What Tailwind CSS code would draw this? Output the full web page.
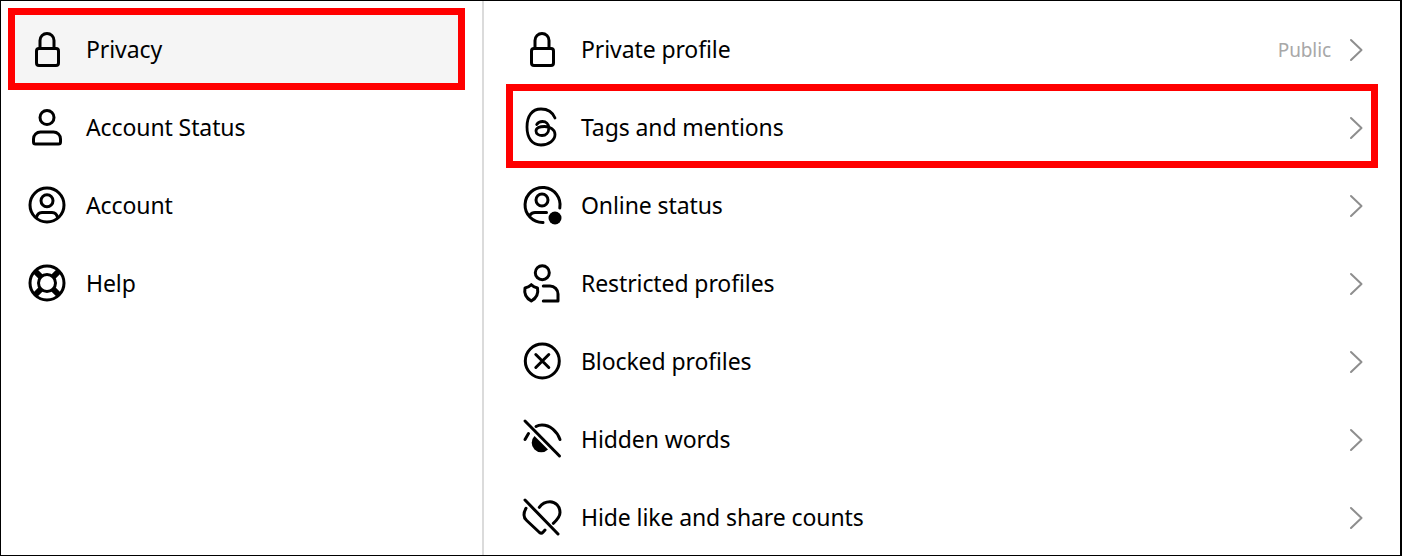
<!DOCTYPE html>
<html lang="en">
<head>
    <meta charset="UTF-8">
    <title>Threads settings - Privacy</title>
    <script src="https://cdn.jsdelivr.net/npm/@tailwindcss/browser@4"></script>
</head>
<body class="bg-white">
    <div class="flex w-[1402px] h-[556px] overflow-hidden border border-r-2 border-black bg-white font-['Noto_Sans',sans-serif] text-[23px] tracking-[-0.1px] text-black">

        <!-- left menu -->
        <nav class="w-[483px] shrink-0 border-r-2 border-[#dbdbdb] pt-[10px]">
            <div class="relative flex items-center h-[78px] ml-[11px] mr-[22px] pl-[17px] gap-[21px] bg-[#f5f5f5]">
                <svg class="w-[36px] h-[36px] overflow-visible" viewBox="0 0 36 36" fill="none" stroke="currentColor" stroke-width="3" stroke-linecap="round" stroke-linejoin="round"><path d="M11 16.5V8.5a7 7 0 0 1 14 0V16.5"/><rect x="7.5" y="16.5" width="22" height="17" rx="2.5"/></svg>
                <span class="pb-[2px]">Privacy</span>
                <div class="absolute -left-[4px] -right-[5px] -top-[3px] -bottom-[1px] border-[7px] border-[#ff0000]"></div>
            </div>
            <div class="flex items-center h-[78px] ml-[11px] mr-[22px] pl-[17px] gap-[21px]">
                <svg class="w-[36px] h-[36px] overflow-visible" viewBox="0 0 36 36" fill="none" stroke="currentColor" stroke-width="3" stroke-linecap="round" stroke-linejoin="round"><circle cx="18" cy="7.5" r="7"/><path d="M4.5 29A7 7 0 0 1 11.5 22H24.5A7 7 0 0 1 31.5 29V32a2 2 0 0 1-2 2H6.5a2 2 0 0 1-2-2Z"/></svg>
                <span class="pb-[2px]">Account Status</span>
            </div>
            <div class="flex items-center h-[78px] ml-[11px] mr-[22px] pl-[17px] gap-[21px]">
                <svg class="w-[36px] h-[36px] overflow-visible" viewBox="0 0 36 36" fill="none" stroke="currentColor" stroke-width="3" stroke-linecap="round" stroke-linejoin="round"><circle cx="18" cy="17" r="17"/><circle cx="18" cy="12.7" r="6"/><path d="M7.5 29.5A6 6 0 0 1 13 24.5H23A6 6 0 0 1 28.5 29.5"/></svg>
                <span class="pb-[2px]">Account</span>
            </div>
            <div class="flex items-center h-[78px] ml-[11px] mr-[22px] pl-[17px] gap-[21px]">
                <svg class="w-[36px] h-[36px] overflow-visible" viewBox="0 0 36 36" fill="none" stroke="currentColor" stroke-width="3"><circle cx="18" cy="17" r="17"/><circle cx="18" cy="17" r="8.5"/><path stroke-width="6" d="M6 5 12 11M30 5 24 11M6 29 12 23M30 29 24 23"/></svg>
                <span class="pb-[2px]">Help</span>
            </div>
        </nav>

        <!-- right list -->
        <div class="flex-1 pt-[10px]">
            <div class="flex items-center h-[78px] ml-[40px] pr-[36px] gap-[21px]">
                <svg class="w-[36px] h-[36px] overflow-visible" viewBox="0 0 36 36" fill="none" stroke="currentColor" stroke-width="3" stroke-linecap="round" stroke-linejoin="round"><path d="M11 16.5V8.5a7 7 0 0 1 14 0V16.5"/><rect x="7.5" y="16.5" width="22" height="17" rx="2.5"/></svg>
                <span class="flex-1 pb-[2px]">Private profile</span>
                <span class="text-[19px] text-[#a8a8a8] -mr-[4px]">Public</span>
                <svg class="w-[16px] h-[24px]" viewBox="0 0 16 24" fill="none" stroke="#8e8e8e" stroke-width="2" stroke-linecap="round" stroke-linejoin="round"><path d="M3 2 13.5 12 3 22"/></svg>
            </div>
            <div class="relative flex items-center h-[78px] ml-[40px] pr-[36px] gap-[21px]">
                <svg class="w-[36px] h-[36px] overflow-visible" viewBox="0 0 36 36" fill="none" stroke="currentColor" stroke-width="2.8" stroke-linecap="round"><path d="M31 8C28.5 2 23-1 17-1 8-1 3 6 3 17 3 28 8 35 17 35 25 35 31 30 31 24.5 31 19.5 26 16.5 20.5 16.5 15.5 16.5 12 18 12 21 12 24 15 25.5 18 25.5 22 25.5 24.8 22.5 24.8 18 24.8 14 22 11.5 18.5 11.5 16 11.5 14 12.5 12.7 14.5"/></svg>
                <span class="flex-1 pb-[2px]">Tags and mentions</span>
                <svg class="w-[16px] h-[24px]" viewBox="0 0 16 24" fill="none" stroke="#8e8e8e" stroke-width="2" stroke-linecap="round" stroke-linejoin="round"><path d="M3 2 13.5 12 3 22"/></svg>
                <div class="absolute -left-[18px] right-[22px] -top-[5px] -bottom-[1px] border-[7px] border-[#ff0000]"></div>
            </div>
            <div class="flex items-center h-[78px] ml-[40px] pr-[36px] gap-[21px]">
                <svg class="w-[36px] h-[36px] overflow-visible" viewBox="0 0 36 36" fill="none" stroke="currentColor" stroke-width="3" stroke-linecap="round" stroke-linejoin="round"><path d="M19 34.5A17.5 17.5 0 1 1 35.8 20"/><circle cx="18" cy="12" r="6"/><path d="M6 27C7.5 25 9 24.5 11 24.5H22.5"/><circle cx="31" cy="30" r="6.5" fill="currentColor" stroke="none"/></svg>
                <span class="flex-1 pb-[2px]">Online status</span>
                <svg class="w-[16px] h-[24px]" viewBox="0 0 16 24" fill="none" stroke="#8e8e8e" stroke-width="2" stroke-linecap="round" stroke-linejoin="round"><path d="M3 2 13.5 12 3 22"/></svg>
            </div>
            <div class="flex items-center h-[78px] ml-[40px] pr-[36px] gap-[21px]">
                <svg class="w-[36px] h-[36px] overflow-visible" viewBox="0 0 36 36" fill="none" stroke="currentColor" stroke-width="3" stroke-linecap="round" stroke-linejoin="round"><circle cx="18.3" cy="6.7" r="7"/><path d="M7.3 18.7C9 20.5 11 21.5 13.5 22 14.5 27 12.5 32 7.3 35 2 32 0 27 1 22 3.5 21.5 5.5 20.5 7.3 18.7Z"/><path d="M19.3 20H26A8 8 0 0 1 34 28V35H19.3"/></svg>
                <span class="flex-1 pb-[2px]">Restricted profiles</span>
                <svg class="w-[16px] h-[24px]" viewBox="0 0 16 24" fill="none" stroke="#8e8e8e" stroke-width="2" stroke-linecap="round" stroke-linejoin="round"><path d="M3 2 13.5 12 3 22"/></svg>
            </div>
            <div class="flex items-center h-[78px] ml-[40px] pr-[36px] gap-[21px]">
                <svg class="w-[36px] h-[36px] overflow-visible" viewBox="0 0 36 36" fill="none" stroke="currentColor" stroke-width="3" stroke-linecap="round" stroke-linejoin="round"><circle cx="18.3" cy="17" r="17"/><path d="M11.8 10.5 24.8 23.5M24.8 10.5 11.8 23.5"/></svg>
                <span class="flex-1 pb-[2px]">Blocked profiles</span>
                <svg class="w-[16px] h-[24px]" viewBox="0 0 16 24" fill="none" stroke="#8e8e8e" stroke-width="2" stroke-linecap="round" stroke-linejoin="round"><path d="M3 2 13.5 12 3 22"/></svg>
            </div>
            <div class="flex items-center h-[78px] ml-[40px] pr-[36px] gap-[21px]">
                <svg class="w-[36px] h-[36px] overflow-visible" viewBox="0 0 36 36" fill="none" stroke="currentColor" stroke-width="3" stroke-linecap="round" stroke-linejoin="round"><path d="M1 -1 35.5 34"/><path d="M1 17.5 4.5 11.5"/><path d="M12 4.5C14 3.3 16 3 18 3 26 3 33 9 36 17.5"/><path fill="currentColor" stroke="none" d="M10.5 14 24 27.5A9.5 9.5 0 0 1 10.5 14Z"/></svg>
                <span class="flex-1 pb-[2px]">Hidden words</span>
                <svg class="w-[16px] h-[24px]" viewBox="0 0 16 24" fill="none" stroke="#8e8e8e" stroke-width="2" stroke-linecap="round" stroke-linejoin="round"><path d="M3 2 13.5 12 3 22"/></svg>
            </div>
            <div class="flex items-center h-[78px] ml-[40px] pr-[36px] gap-[21px]">
                <svg class="w-[36px] h-[36px] overflow-visible" viewBox="0 0 36 36" fill="none" stroke="currentColor" stroke-width="3" stroke-linecap="round" stroke-linejoin="round"><path d="M1 0 34 34"/><path d="M15.3 7.3C18 3.5 22 1.7 26 1.7 31.5 1.7 36 6.5 36 12.5 36 16.5 33 20 29.3 23.3"/><path d="M2 8.3C.7 10.5 0 12.5 0 15 0 17 1 19 2.7 20.5L15.5 32.5C16.5 33.3 18 33.3 19 32.2L21 30"/></svg>
                <span class="flex-1 pb-[2px]">Hide like and share counts</span>
                <svg class="w-[16px] h-[24px]" viewBox="0 0 16 24" fill="none" stroke="#8e8e8e" stroke-width="2" stroke-linecap="round" stroke-linejoin="round"><path d="M3 2 13.5 12 3 22"/></svg>
            </div>
        </div>
    </div>
</body>
</html>
